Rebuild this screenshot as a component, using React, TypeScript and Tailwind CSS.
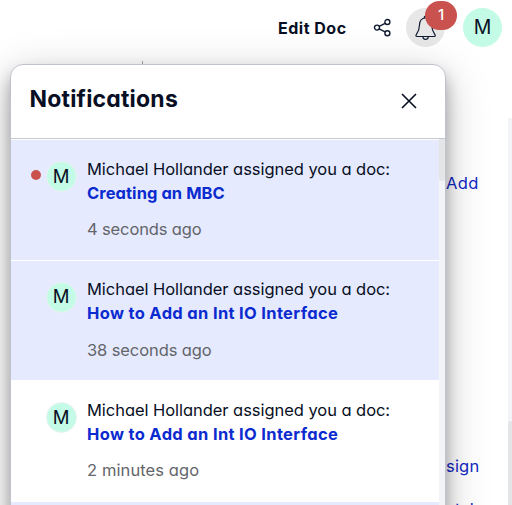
import React from "react";

type Notice = {
  title: string;
  time: string;
  unread: boolean;
  highlighted: boolean;
  titleClass: string;
  timeClass: string;
};

const notices: Notice[] = [
  { title: "Creating an MBC", time: "4 seconds ago", unread: true, highlighted: true, titleClass: "tracking-[0.06px]", timeClass: "tracking-[-0.13px]" },
  { title: "How to Add an Int IO Interface", time: "38 seconds ago", unread: false, highlighted: true, titleClass: "tracking-[0.33px]", timeClass: "tracking-[-0.1px]" },
  { title: "How to Add an Int IO Interface", time: "2 minutes ago", unread: false, highlighted: false, titleClass: "tracking-[0.33px]", timeClass: "tracking-[0.1px]" },
];

function ShareIcon() {
  return (
    <svg width="19" height="20" viewBox="0 0 19 20" fill="none" stroke="#111c33" strokeWidth="1.4">
      <circle cx="4" cy="9.6" r="2.5" />
      <circle cx="14.4" cy="4" r="2.5" />
      <circle cx="14.4" cy="15.2" r="2.5" />
      <path d="M6.2 8.4l5.9-3.1M6.2 10.8l5.9 3.1" />
    </svg>
  );
}

function BellIcon() {
  return (
    <svg width="22" height="26" viewBox="0 0 22 26" fill="none" stroke="#111c33" strokeWidth="1.2" strokeLinejoin="round">
      <path d="M9.2 3.3V2.4a1.4 1.4 0 0 1 2.8 0v.9M10.6 3C6.8 3 4.6 6 4.5 10c-.1 5-1.3 7-3.3 9.9-.6.9-.2 1.6.7 1.6h17.4c.9 0 1.3-.7.7-1.6-2-2.9-3.2-4.9-3.3-9.9-.1-4-2.3-7-6.1-7z" />
      <path d="M7.9 21.7c.2 3.6 5.2 3.6 5.4 0" />
    </svg>
  );
}

function TopBar() {
  return (
    <header className="flex h-[55px] items-center justify-end pr-[10px]">
      <span className="w-[68px] whitespace-nowrap text-[16px] font-[650] tracking-[0.5px]">Edit Doc</span>
      <span className="ml-[27px]"><ShareIcon /></span>
      <div className="relative ml-[14px] flex size-[39px] items-center justify-center rounded-full bg-[#e7e7e7]">
        <BellIcon />
        <span className="absolute -top-[7px] left-[19px] flex h-[29px] w-8 items-center justify-center rounded-full bg-[#c9524e] text-[15px] font-medium text-white">1</span>
      </div>
      <div className="ml-[18px] flex size-[39px] items-center justify-center rounded-full bg-[#c4fbe6] pt-px text-[19.5px]">M</div>
    </header>
  );
}

function NoticeRow({ notice }: { notice: Notice }) {
  return (
    <li className={`flex h-[119.5px] shrink-0 pt-[16.5px] ${notice.highlighted ? "bg-[#e6eaff]" : "bg-white"}`}>
      <div className="flex h-[40px] w-[76px] shrink-0 items-center pl-[19.5px]">
        <span className={`mb-[3px] mr-[5px] size-[10px] rounded-full ${notice.unread ? "bg-[#c9524e]" : "bg-transparent"}`} />
        <span className="flex size-[31px] items-center justify-center rounded-full border border-[#e9f2f3] bg-[#c4fbe6] text-[18.5px]">M</span>
      </div>
      <div className="whitespace-nowrap text-[16.5px] leading-6">
        <p className="tracking-[-0.05px]">Michael Hollander assigned you a doc:</p>
        <p className={`mt-[0.4px] font-[650] text-[#0b2bd0] ${notice.titleClass}`}>{notice.title}</p>
        <p className={`mt-[12.6px] text-[#63656a] ${notice.timeClass}`}>{notice.time}</p>
      </div>
    </li>
  );
}

function NotificationsPanel() {
  return (
    <section className="absolute left-[10px] top-[64px] h-[480px] w-[436px] overflow-hidden rounded-t-[13px] border-[1.5px] border-[#bfc4cc] bg-white shadow-[0_10px_44px_rgba(0,0,0,0.22),0_10px_16px_rgba(0,0,0,0.30)]">
      <div className="flex h-[74px] items-center justify-between border-b border-[#c5c9cf] pl-[18.5px] pr-[28px]">
        <h1 className="pb-[5px] text-[23px] font-[650] tracking-[0.2px]">Notifications</h1>
        <svg className="mb-[2px]" width="16" height="16" viewBox="0 0 16 16" stroke="#080f24" strokeWidth="1.6">
          <path d="M1 1l14 14M15 1L1 15" />
        </svg>
      </div>
      <div className="flex">
        <ul className="flex w-[428px] flex-col gap-px pt-px">
          {notices.map((notice, index) => <NoticeRow key={index} notice={notice} />)}
          <li className="h-[60px] bg-[#e6eaff]" />
        </ul>
        <div className="flex-1 bg-[#f2f4f7]"><div className="h-[42px] rounded-b-[3px] bg-[#e4e5e7]" /></div>
      </div>
    </section>
  );
}

function PageContent() {
  return (
    <main className="flex h-[450px] text-[16.5px] leading-6 text-[#1028c4]">
      <div className="w-[446px] shrink-0 pl-[142px]"><div className="mt-[6px] h-5 w-px bg-[#9ca3ad]" /></div>
      <div className="w-[62px] shrink-0 overflow-hidden pt-[116px]">
        <p className="tracking-[0.4px]">Add</p>
        <p className="mt-[259px] tracking-[0.2px]">sign</p>
        <p className="mt-[19px] pl-[9px]">tch</p>
      </div>
      <div className="mt-[63px] flex-1 bg-[#f2f4f7]"><div className="mt-[303px] h-[84px] rounded-tl-[3px] bg-[#e4e5e7]" /></div>
    </main>
  );
}

export default function App() {
  return (
    <div className="relative h-[505px] w-[512px] overflow-hidden bg-white font-['Inter',sans-serif] text-[#080f24] [font-feature-settings:'cv11']">
      <TopBar />
      <PageContent />
      <NotificationsPanel />
    </div>
  );
}
